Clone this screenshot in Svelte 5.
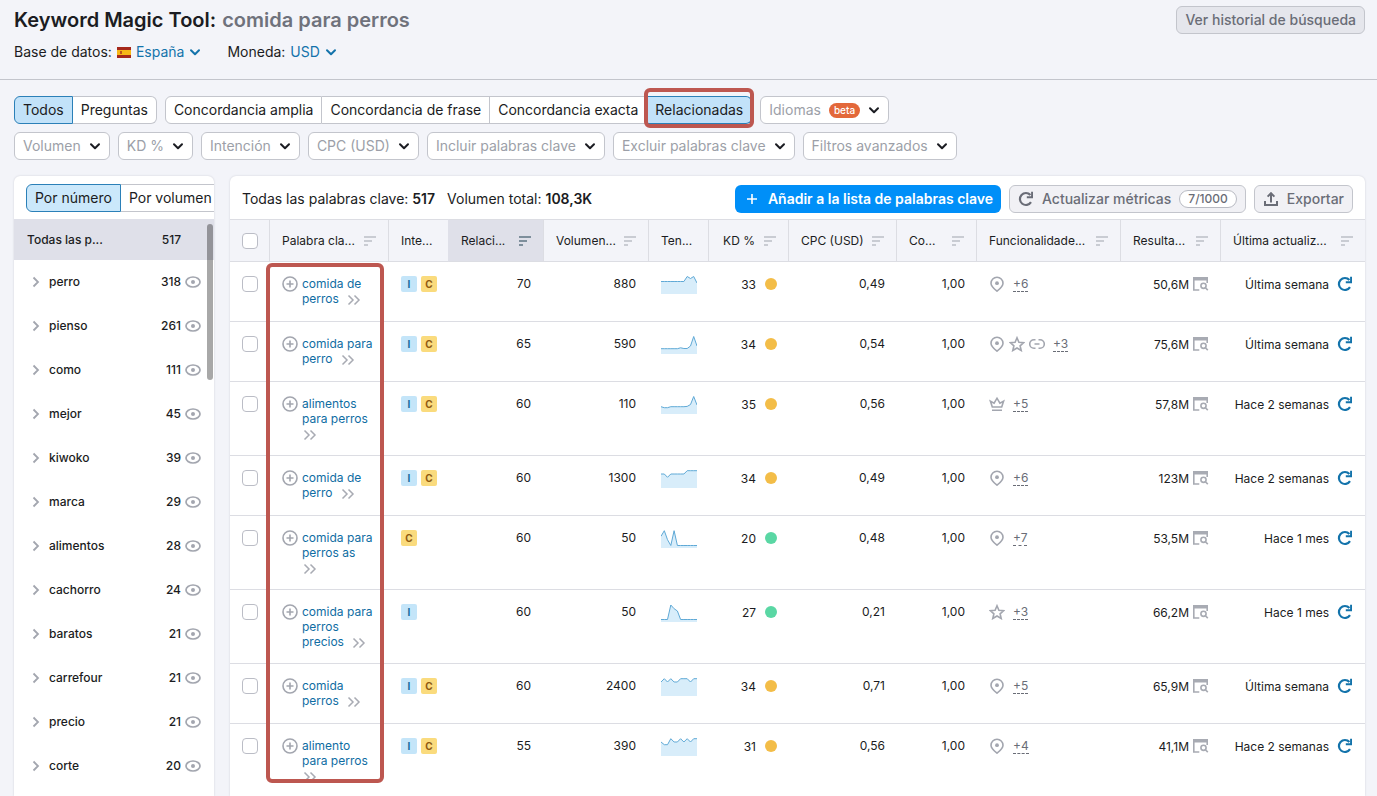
<script>
  const modes = ['Todos', 'Preguntas'];
  const matches = ['Concordancia amplia', 'Concordancia de frase', 'Concordancia exacta', 'Relacionadas'];
  const filters = ['Volumen', 'KD %', 'Intención', 'CPC (USD)', 'Incluir palabras clave', 'Excluir palabras clave', 'Filtros avanzados'];
  const sortModes = ['Por número', 'Por volumen'];

  const groups = [
    { name: 'perro', count: 318 },
    { name: 'pienso', count: 261 },
    { name: 'como', count: 111 },
    { name: 'mejor', count: 45 },
    { name: 'kiwoko', count: 39 },
    { name: 'marca', count: 29 },
    { name: 'alimentos', count: 28 },
    { name: 'cachorro', count: 24 },
    { name: 'baratos', count: 21 },
    { name: 'carrefour', count: 21 },
    { name: 'precio', count: 21 },
    { name: 'corte', count: 20 },
  ];

  const columns = [
    { key: 'keyword', label: 'Palabra cla...', sort: true },
    { key: 'intent', label: 'Inte...' },
    { key: 'related', label: 'Relaci...', sort: true },
    { key: 'volume', label: 'Volumen...', sort: true },
    { key: 'trend', label: 'Ten...' },
    { key: 'kd', label: 'KD %', sort: true },
    { key: 'cpc', label: 'CPC (USD)', sort: true },
    { key: 'comp', label: 'Co...', sort: true },
    { key: 'serp', label: 'Funcionalidade...', sort: true },
    { key: 'results', label: 'Resulta...', sort: true },
    { key: 'updated', label: 'Última actualiz...', sort: true },
  ];

  // trend values are distances from the top of a 19px high chart
  const rows = [
    { keyword: 'comida de perros', intent: ['I', 'C'], related: 70, volume: 880, trend: [6.5, 6.5, 6.5, 6.5, 6.5, 6.5, 6.5, 6.5, 1.5, 3.5, 1.5, 8], kd: 33, cpc: '0,49', serp: ['pin'], more: 6, results: '50,6M', updated: 'Última semana' },
    { keyword: 'comida para perro', intent: ['I', 'C'], related: 65, volume: 590, trend: [13.7, 13.7, 13.7, 13.7, 13.7, 13.7, 12.8, 13.5, 13.5, 11, 1.5, 11], kd: 34, cpc: '0,54', serp: ['pin', 'star', 'link'], more: 3, results: '75,6M', updated: 'Última semana' },
    { keyword: 'alimentos para perros', intent: ['I', 'C'], related: 60, volume: 110, trend: [11.7, 12.7, 12.7, 11.7, 11.7, 11.7, 11.7, 11.7, 11.4, 9.5, 1.5, 10], kd: 35, cpc: '0,56', serp: ['crown'], more: 5, results: '57,8M', updated: 'Hace 2 semanas' },
    { keyword: 'comida de perro', intent: ['I', 'C'], related: 60, volume: 1300, trend: [5, 5, 8.3, 5, 5, 5, 5, 5, 1.7, 1.7, 1.7, 1.7], kd: 34, cpc: '0,49', serp: ['pin'], more: 6, results: '123M', updated: 'Hace 2 semanas' },
    { keyword: 'comida para perros as', intent: ['C'], related: 60, volume: 50, trend: [7.3, 1.7, 10.7, 16.5, 1.7, 16.5, 16.5, 16.5, 16.5, 16.5, 16.5, 16.5], kd: 20, cpc: '0,48', serp: ['pin'], more: 7, results: '53,5M', updated: 'Hace 1 mes' },
    { keyword: 'comida para perros precios', intent: ['I'], related: 60, volume: 50, trend: [16.5, 16.5, 16.5, 2, 5.7, 8, 16.5, 16.5, 16.5, 16.5, 16.5, 16.5], kd: 27, cpc: '0,21', serp: ['star'], more: 3, results: '66,2M', updated: 'Hace 1 mes' },
    { keyword: 'comida perros', intent: ['I', 'C'], related: 60, volume: 2400, trend: [5, 1.7, 5, 1.7, 5, 5, 1.7, 1.7, 1.7, 5, 1.7, 1.7], kd: 34, cpc: '0,71', serp: ['pin'], more: 5, results: '65,9M', updated: 'Última semana' },
    { keyword: 'alimento para perros', intent: ['I', 'C'], related: 55, volume: 390, trend: [5, 7.7, 7.7, 1.7, 5, 5, 1.7, 5, 1.7, 5, 1.7, 1.7], kd: 31, cpc: '0,56', serp: ['pin'], more: 4, results: '41,1M', updated: 'Hace 2 semanas' },
  ];

  let mode = $state('Todos');
  let match = $state('Relacionadas');
  let sortMode = $state('Por número');
  let sortKey = $state('related');

  function points(values) {
    return values.map((v, i) => `${((i * 36) / 11).toFixed(1)},${v}`).join(' ');
  }
</script>

{#snippet chevron()}
  <svg class="chevron" width="12" height="12" viewBox="0 0 12 12" aria-hidden="true">
    <path d="M2 4.2 6 8.2l4-4" fill="none" stroke="currentColor" stroke-width="2" stroke-linecap="round" stroke-linejoin="round" />
  </svg>
{/snippet}

{#snippet reload()}
  <svg width="16" height="16" viewBox="0 0 16 16" aria-hidden="true">
    <path d="M13 11.2A6 6 0 1 1 12.4 4" fill="none" stroke="currentColor" stroke-width="2.2" />
    <path d="M15 .8v6.4H8.800V5.300h4.300V.8z" fill="currentColor" />
  </svg>
{/snippet}

{#snippet serpIcon(name)}
  <svg class="serp-icon" width="16" height="16" viewBox="0 0 16 16" aria-hidden="true">
    {#if name === 'pin'}
      <path d="M8 1.200a6 6 0 0 1 6 6c0 3-2.600 5.300-6 8-3.400-2.700-6-5-6-8a6 6 0 0 1 6-6z" />
      <circle cx="8" cy="7.200" r="1.900" class="solid" />
    {:else if name === 'star'}
      <path d="m8 1.800 1.900 4.400 4.900.4-3.700 3.200 1.100 4.700L8 12l-4.200 2.500 1.100-4.700L1.200 6.600l4.900-.4z" />
    {:else if name === 'link'}
      <path d="M6.500 12.300H5a4.300 4.300 0 0 1 0-8.600h1.500M9.500 3.700H11a4.300 4.300 0 0 1 0 8.600H9.500M5.500 8h5" />
    {:else}
      <path d="M3.300 11 1.400 5.200l3.700 1.900L8 2.200l2.900 4.900 3.700-1.900L12.700 11zM3 14.300h10" />
    {/if}
  </svg>
{/snippet}

{#snippet toggles(items, current, pick)}
  {#each items as item}
    <button class="toggle" class:active={item === current} aria-pressed={item === current} onclick={() => pick(item)}>{item}</button>
  {/each}
{/snippet}

<div class="page">
  <header class="top">
    <div class="title-row">
      <h1>Keyword Magic Tool: <span>comida para perros</span></h1>
      <button class="btn history">Ver historial de búsqueda</button>
    </div>
    <div class="settings">
      <div class="setting">
        Base de datos:
        <button class="picker">
          <svg width="14" height="11" viewBox="0 0 14 11" aria-hidden="true">
            <path fill="#a5281b" d="M0 0h14v11H0z" />
            <path fill="#f7b716" d="M0 3h14v5H0z" />
            <path fill="#c0561b" d="M3 4h2v3H3z" />
          </svg>
          España {@render chevron()}
        </button>
      </div>
      <div class="setting">Moneda: <button class="picker">USD {@render chevron()}</button></div>
    </div>
  </header>

  <div class="filters">
    <div class="filter-row">
      <div class="group">{@render toggles(modes, mode, (v) => (mode = v))}</div>
      <div class="group marked">
        {@render toggles(matches, match, (v) => (match = v))}
        <i class="mark"></i>
      </div>
      <button class="filter">Idiomas <span class="beta">beta</span> {@render chevron()}</button>
    </div>
    <div class="filter-row">
      {#each filters as name}
        <button class="filter">{name} {@render chevron()}</button>
      {/each}
    </div>
  </div>

  <main>
    <aside class="panel sidebar">
      <div class="sort-modes">
        <div class="group">{@render toggles(sortModes, sortMode, (v) => (sortMode = v))}</div>
      </div>
      <div class="group-list">
        <button class="all"><span>Todas las p...</span><span>517</span></button>
        {#each groups as g}
          <div class="item">
            <button class="item-name">
              <svg width="8" height="12" viewBox="0 0 8 12" aria-hidden="true">
                <path d="m1.500 1.500 4.500 4.500-4.500 4.500" fill="none" stroke="#a3a6af" stroke-width="1.800" />
              </svg>
              {g.name}
            </button>
            <span>{g.count}</span>
            <button class="eye" aria-label="Excluir {g.name}">
              <svg width="16" height="12" viewBox="0 0 16 12" aria-hidden="true">
                <ellipse cx="8" cy="6" rx="7" ry="5" fill="none" stroke="#a3a6af" stroke-width="1.700" />
                <circle cx="8" cy="6" r="2" fill="#a3a6af" />
              </svg>
            </button>
          </div>
        {/each}
        <i class="scroll-thumb"></i>
      </div>
    </aside>

    <section class="panel results">
      <div class="toolbar">
        <span>Todas las palabras clave: <b>517</b></span>
        <span>Volumen total: <b>108,3K</b></span>
        <div class="actions">
          <button class="btn primary">
            <svg width="10" height="10" viewBox="0 0 10 10" aria-hidden="true"><path d="M5 0v10M0 5h10" stroke="currentColor" stroke-width="1.600" /></svg>
            Añadir a la lista de palabras clave
          </button>
          <button class="btn">{@render reload()} Actualizar métricas <span class="quota">7/1000</span></button>
          <button class="btn">
            <svg width="16" height="16" viewBox="0 0 16 16" aria-hidden="true">
              <path d="M2 10v4h12v-4M8 11.500V3M4.600 5.600 8 2.200l3.400 3.400" fill="none" stroke="currentColor" stroke-width="2" />
            </svg>
            Exportar
          </button>
        </div>
      </div>

      <div class="table-wrap">
        <table>
          <thead>
            <tr>
              <th class="col-check"><input type="checkbox" aria-label="Seleccionar todo" /></th>
              {#each columns as c}
                <th class="col-{c.key}" class:sorted={c.key === sortKey}>
                  {#if c.sort}
                    <button class="sort" onclick={() => (sortKey = c.key)}>
                      {c.label}
                      <svg width="12" height="10" viewBox="0 0 12 10" aria-hidden="true">
                        <path d="M0 1h12M0 5h8M0 9h4" stroke="currentColor" stroke-width="1.700" />
                      </svg>
                    </button>
                  {:else}
                    {c.label}
                  {/if}
                </th>
              {/each}
            </tr>
          </thead>
          <tbody>
            {#each rows as r}
              <tr>
                <td class="check"><input type="checkbox" aria-label={r.keyword} /></td>
                <td>
                  <div class="keyword">
                    <button class="add" aria-label="Añadir {r.keyword}">
                      <svg width="16" height="16" viewBox="0 0 16 16" aria-hidden="true">
                        <circle cx="8" cy="8" r="7" />
                        <path d="M8 4.500v7M4.500 8h7" />
                      </svg>
                    </button>
                    <div>
                      <a href="#keyword">{r.keyword}</a>
                      <svg class="more" width="16" height="12" viewBox="0 0 16 12" aria-hidden="true">
                        <path d="m2.500 1.500 4.500 4.500-4.500 4.500M8.500 1.500 13 6l-4.500 4.500" />
                      </svg>
                    </div>
                  </div>
                </td>
                <td>
                  <div class="intents">
                    {#each r.intent as t}<span class="intent {t}">{t}</span>{/each}
                  </div>
                </td>
                <td class="num related">{r.related}</td>
                <td class="num related">{r.volume}</td>
                <td class="trend">
                  <svg width="36" height="19" viewBox="0 0 36 19" role="img" aria-label="Tendencia">
                    <polygon points="0,19 {points(r.trend)} 36,19" fill="#d8edfa" />
                    <polyline points={points(r.trend)} fill="none" stroke="#5fa9d6" stroke-width="1" />
                  </svg>
                </td>
                <td>
                  <div class="kd">{r.kd}<i class:easy={r.kd < 30}></i></div>
                </td>
                <td class="num">{r.cpc}</td>
                <td class="num">1,00</td>
                <td>
                  <div class="serp">
                    {#each r.serp as name}{@render serpIcon(name)}{/each}
                    <span class="plus">+{r.more}</span>
                  </div>
                </td>
                <td>
                  <div class="total">
                    {r.results}
                    <svg width="16" height="14" viewBox="0 0 16 14" aria-hidden="true">
                      <path d="M0 0h15v3.500H0z" fill="#a8abb3" />
                      <path d="M.8 2v11h5.500M14.200 3v3" fill="none" stroke="#a8abb3" stroke-width="1.600" />
                      <circle cx="10.500" cy="8.800" r="2.600" fill="none" stroke="#a8abb3" stroke-width="1.600" />
                      <path d="m12.400 10.700 2.400 2.400" stroke="#a8abb3" stroke-width="1.600" />
                    </svg>
                  </div>
                </td>
                <td class="last">
                  <div class="updated">
                    {r.updated}
                    <button class="refresh" aria-label="Actualizar {r.keyword}">{@render reload()}</button>
                  </div>
                </td>
              </tr>
            {/each}
          </tbody>
        </table>
      </div>
      <i class="keyword-mark"></i>
    </section>
  </main>
</div>

<style>
  :global(body) {
    background: #f3f4f9;
    color: #1b1c22;
    font: 14px/20px Inter, 'Liberation Sans', sans-serif;
  }

  .page {
    display: flex;
    flex-direction: column;
    height: 100vh;
    overflow: hidden;
  }

  button {
    padding: 0;
    border: 0;
    background: none;
    color: inherit;
    font: inherit;
    white-space: nowrap;
    cursor: pointer;
  }

  svg {
    display: block;
    flex: none;
  }

  .top {
    padding: 6px 12px 17px 14px;
    border-bottom: 1px solid #c3c5cc;
  }

  .title-row {
    display: flex;
    justify-content: space-between;
    align-items: center;
  }

  h1 {
    margin: 0;
    font-size: 20px;
    line-height: 28px;
    font-weight: 600;
  }
  h1 span {
    margin-left: 1px;
    color: #6f727c;
  }

  .settings {
    display: flex;
    gap: 26px;
    margin-top: 8px;
  }

  .setting {
    display: flex;
    align-items: center;
    gap: 5px;
  }

  .picker {
    display: inline-flex;
    align-items: center;
    gap: 5px;
    color: #1373ab;
  }

  .btn {
    display: inline-flex;
    align-items: center;
    box-sizing: border-box;
    height: 28px;
    padding: 0 8px;
    gap: 8px;
    border: 1px solid #c3c5cc;
    border-radius: 6px;
    background: #f1f1f5;
    color: #6a6d77;
    font-weight: 500;
  }
  .btn.history {
    background: #e5e6ec;
  }
  .btn.primary {
    padding: 0 8px 0 12px;
    gap: 11px;
    border: 0;
    background: #008ff8;
    color: #fff;
    font-weight: 600;
  }

  .quota {
    box-sizing: border-box;
    height: 18px;
    padding: 0 8px;
    border: 1px solid #b9bbc3;
    border-radius: 9px;
    background: #fff;
    font-size: 12px;
    line-height: 16px;
  }

  .filters {
    display: flex;
    flex-direction: column;
    gap: 8px;
    padding: 16px 14px;
  }

  .filter-row {
    display: flex;
    gap: 8px;
  }

  .group {
    display: flex;
  }

  .toggle {
    box-sizing: border-box;
    height: 28px;
    padding: 0 8px;
    border: 1px solid #c3c5cc;
    border-left-width: 0;
    background: #fff;
  }
  .toggle:first-child {
    border-left-width: 1px;
    border-radius: 6px 0 0 6px;
  }
  .toggle:nth-last-child(1 of .toggle) {
    border-radius: 0 6px 6px 0;
  }
  .toggle.active {
    border-color: #2b80b8;
    background: #c2e2f9;
  }

  .marked {
    position: relative;
  }
  .mark {
    position: absolute;
    top: -8px;
    right: -2px;
    width: 102px;
    height: 32px;
    border: 4px solid #bd5750;
    border-radius: 6px;
  }

  .filter {
    display: inline-flex;
    align-items: center;
    box-sizing: border-box;
    height: 28px;
    padding: 0 8px;
    gap: 8px;
    border: 1px solid #c3c5cc;
    border-radius: 6px;
    background: #fff;
    color: #9c9fa8;
  }
  .filter .chevron {
    color: #1b1c22;
  }

  .beta {
    padding: 0 5px;
    border-radius: 8px;
    background: #e3683a;
    color: #fff;
    font-size: 10px;
    line-height: 15px;
    font-weight: 500;
  }

  main {
    display: flex;
    flex: 1;
    gap: 16px;
    min-height: 0;
    padding: 0 12px 0 14px;
  }

  .panel {
    border-radius: 6px 6px 0 0;
    background: #fff;
    box-shadow: 0 0 2px #c9cbd3;
    overflow: hidden;
  }

  .sidebar {
    flex: none;
    width: 200px;
    font-size: 12px;
    font-weight: 500;
  }

  .sort-modes {
    padding: 8px 0 7px 12px;
    font-size: 14px;
    font-weight: 400;
  }
  .sort-modes .active {
    background: #cbe8fb;
  }

  .group-list {
    position: relative;
  }

  .all {
    display: flex;
    justify-content: space-between;
    align-items: center;
    box-sizing: border-box;
    width: 100%;
    height: 41px;
    padding: 0 33px 0 13px;
    background: #dfe0e9;
  }

  .item {
    display: flex;
    align-items: center;
    height: 44px;
    padding: 0 13px 0 18px;
  }

  .item-name {
    display: flex;
    align-items: center;
    flex: 1;
    gap: 9px;
  }

  .eye {
    margin-left: 4px;
  }

  .scroll-thumb {
    position: absolute;
    top: 5px;
    right: 1px;
    width: 6px;
    height: 156px;
    border-radius: 3px;
    background: rgba(0, 0, 0, 0.34);
  }

  .results {
    position: relative;
    display: flex;
    flex-direction: column;
    flex: 1;
    min-width: 0;
  }

  .toolbar {
    display: flex;
    align-items: center;
    gap: 12px;
    height: 41px;
    padding: 2px 12px 0;
    white-space: nowrap;
  }

  .toolbar b {
    font-weight: 600;
  }

  .actions {
    display: flex;
    gap: 8px;
    margin-left: auto;
  }

  .table-wrap {
    flex: 1;
    min-height: 0;
    margin-bottom: 14px;
    overflow: hidden;
  }

  table {
    width: 100%;
    table-layout: fixed;
    border-collapse: separate;
    border-spacing: 0;
    font-size: 12px;
    line-height: 15px;
  }

  th {
    box-sizing: border-box;
    height: 43px;
    padding: 0 12px;
    border: solid #dcdde3;
    border-width: 1px 0 1px 1px;
    background: #f3f4f9;
    font-weight: 400;
    text-align: left;
    white-space: nowrap;
  }
  th:first-child {
    border-left-width: 0;
  }
  th.sorted {
    border-left-color: #dfe0e9;
    background: #dfe0e9;
  }

  .col-check { width: 39px; }
  .col-keyword { width: 119px; }
  .col-intent { width: 60px; }
  .col-related { width: 95px; }
  .col-volume { width: 105px; }
  .col-trend { width: 60px; }
  .col-kd { width: 80px; }
  .col-cpc { width: 108px; }
  .col-comp { width: 80px; }
  .col-serp { width: 144px; }
  .col-results { width: 100px; }

  .sort {
    display: flex;
    justify-content: space-between;
    align-items: center;
    width: 100%;
  }
  .sort svg {
    color: #bcbec6;
  }
  .sorted .sort svg {
    color: #5f7482;
  }
  .col-kd .sort {
    justify-content: flex-end;
    gap: 9px;
  }

  td {
    box-sizing: border-box;
    height: 60px;
    padding: 14px 11px 14px 13px;
    border-bottom: 1px solid #dcdde3;
    vertical-align: top;
  }

  td.check,
  td.related,
  td.last {
    padding-left: 12px;
    padding-right: 12px;
  }

  td.trend {
    padding-top: 13px;
    padding-bottom: 0;
  }

  .num {
    text-align: right;
  }

  input[type='checkbox'] {
    display: block;
    appearance: none;
    box-sizing: border-box;
    width: 16px;
    height: 16px;
    margin: 0;
    border: 1px solid #bbbdc6;
    border-radius: 4px;
    background: #fff;
  }

  .keyword {
    display: flex;
    align-items: flex-start;
    gap: 4px;
  }

  .add svg {
    fill: none;
    stroke: #a3a6af;
    stroke-width: 1.6;
  }

  a {
    margin-right: 4px;
    color: #0f6da3;
    text-decoration: none;
  }

  .more {
    display: inline-block;
    vertical-align: -3px;
    fill: none;
    stroke: #a8abb3;
    stroke-width: 1.5;
  }

  .intents {
    display: flex;
    gap: 4px;
  }

  .intent {
    width: 16px;
    border-radius: 2px;
    font-size: 10px;
    line-height: 16px;
    font-weight: 700;
    text-align: center;
  }
  .I {
    background: #c4e5f9;
    color: #176a9d;
  }
  .C {
    background: #fadb7d;
    color: #8f5a12;
  }

  .kd,
  .serp,
  .total,
  .updated {
    display: flex;
    align-items: center;
    height: 16px;
    white-space: nowrap;
  }

  .kd,
  .total,
  .updated {
    justify-content: flex-end;
  }

  .kd {
    gap: 9px;
  }
  .kd i {
    width: 12px;
    height: 12px;
    border-radius: 50%;
    background: #f3bd48;
  }
  .kd .easy {
    background: #5ad7a4;
  }

  .serp {
    gap: 4px;
  }

  .serp-icon {
    fill: none;
    stroke: #a3a6af;
    stroke-width: 1.6;
  }
  .serp-icon .solid {
    fill: #a3a6af;
    stroke: none;
  }

  .plus {
    margin-left: 4px;
    border-bottom: 1px dashed #6a6d77;
    color: #6a6d77;
  }

  .total {
    gap: 4px;
  }

  .updated {
    gap: 8px;
  }

  .refresh {
    color: #1373ab;
  }

  .keyword-mark {
    position: absolute;
    top: 87px;
    left: 36px;
    bottom: 13px;
    width: 110px;
    border: 4px solid #bd5750;
    border-radius: 6px;
  }
</style>
